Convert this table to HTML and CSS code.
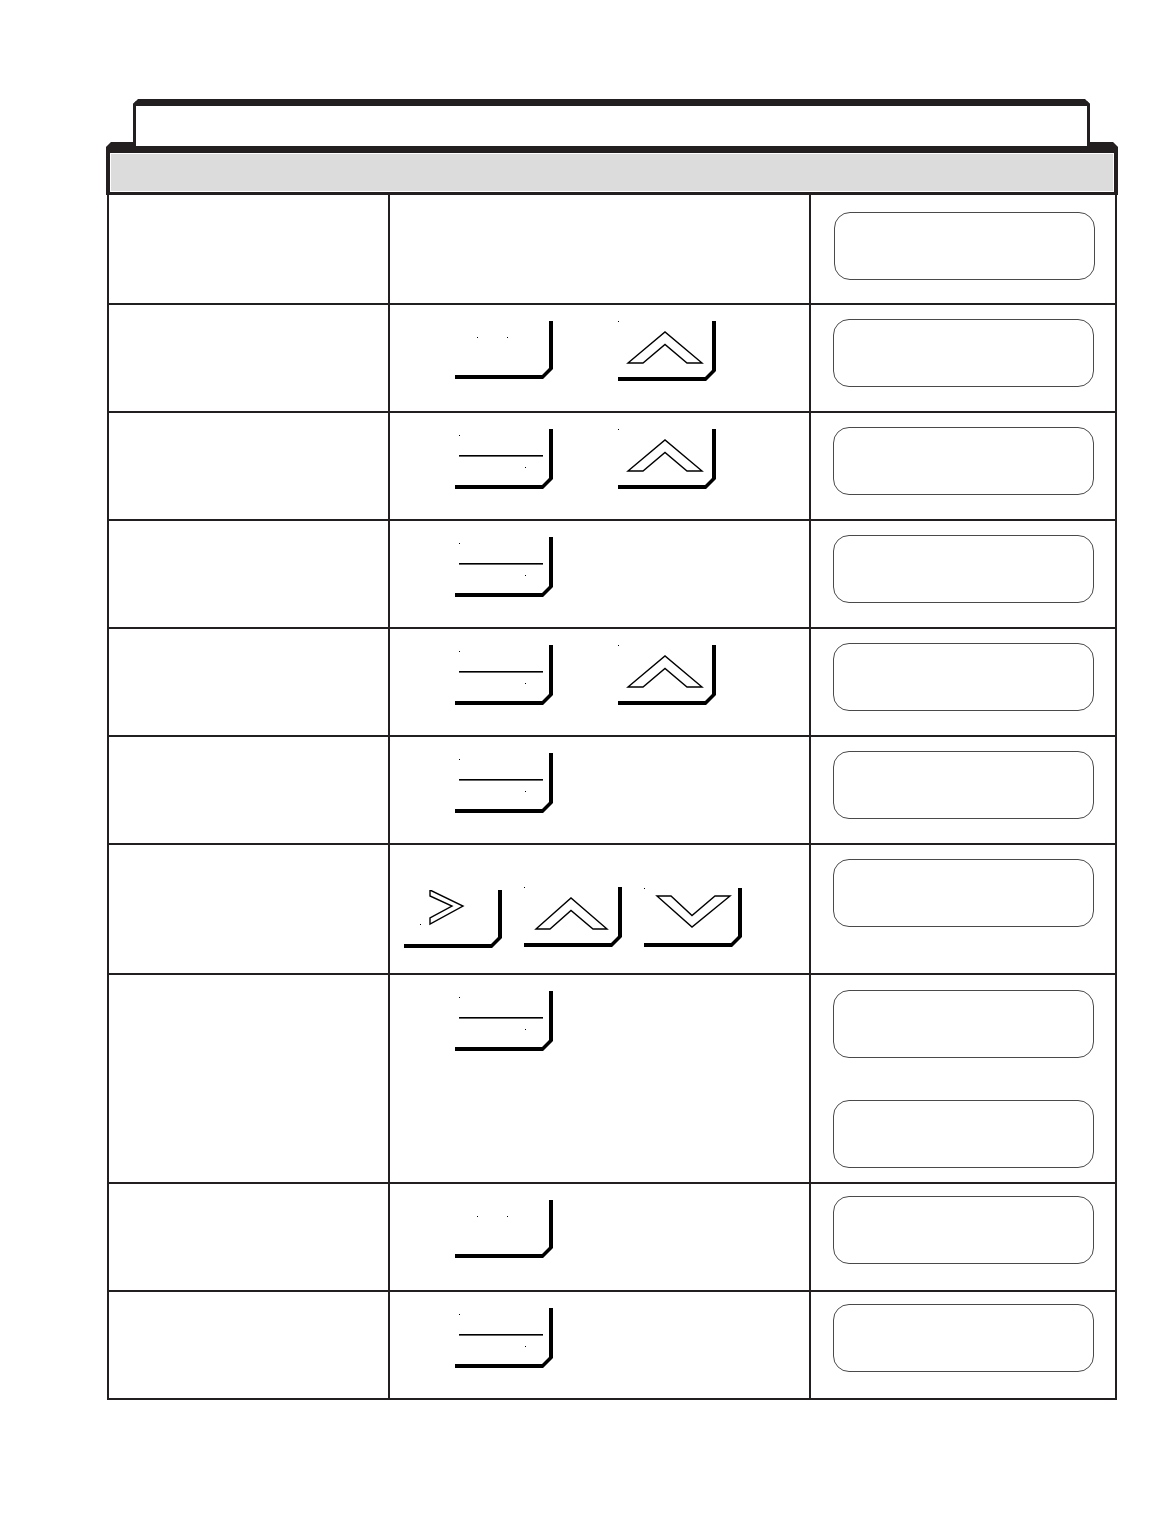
FILE: index.html
```html
<!DOCTYPE html>
<html lang="en">
<head>
<meta charset="utf-8">
<title>Key sequence table</title>
<link rel="stylesheet" href="styles.css">
</head>
<body>
<div class="page">
  <div class="tab"></div>
  <div class="header"></div>
  <div class="grid">
    <!-- row 1 -->
    <div class="cell"></div>
    <div class="cell"></div>
    <div class="cell disp first"><div class="lcd"></div></div>

    <!-- row 2 -->
    <div class="cell"></div>
    <div class="cell keys">
      <svg class="key" viewBox="0 0 98 58" width="98" height="58"><polygon points="0,54 87,54 94,47 94,0 98,0 98,48 88,58 0,58"/><rect x="22" y="16" width="1" height="1"/><rect x="52" y="16" width="1" height="1"/></svg>
      <svg class="key" viewBox="0 0 98 60" width="98" height="60"><polygon points="0,56 87,56 94,49 94,0 98,0 98,50 88,60 0,60"/><rect x="0" y="0" width="1" height="1"/><polygon class="chev" points="10,42 47,11 84,42 69,42 47,23.5 25,42"/></svg>
    </div>
    <div class="cell disp"><div class="lcd"></div></div>

    <!-- row 3 -->
    <div class="cell"></div>
    <div class="cell keys">
      <svg class="key" viewBox="0 0 98 60" width="98" height="60"><polygon points="0,56 87,56 94,49 94,0 98,0 98,50 88,60 0,60"/><rect x="4" y="6" width="1" height="1"/><rect x="4" y="26" width="84" height="1.6"/><rect x="70" y="38" width="1" height="1"/></svg>
      <svg class="key" viewBox="0 0 98 60" width="98" height="60"><polygon points="0,56 87,56 94,49 94,0 98,0 98,50 88,60 0,60"/><rect x="0" y="0" width="1" height="1"/><polygon class="chev" points="10,42 47,11 84,42 69,42 47,23.5 25,42"/></svg>
    </div>
    <div class="cell disp"><div class="lcd"></div></div>

    <!-- row 4 -->
    <div class="cell"></div>
    <div class="cell keys">
      <svg class="key" viewBox="0 0 98 60" width="98" height="60"><polygon points="0,56 87,56 94,49 94,0 98,0 98,50 88,60 0,60"/><rect x="4" y="6" width="1" height="1"/><rect x="4" y="26" width="84" height="1.6"/><rect x="70" y="38" width="1" height="1"/></svg>
    </div>
    <div class="cell disp"><div class="lcd"></div></div>

    <!-- row 5 -->
    <div class="cell"></div>
    <div class="cell keys">
      <svg class="key" viewBox="0 0 98 60" width="98" height="60"><polygon points="0,56 87,56 94,49 94,0 98,0 98,50 88,60 0,60"/><rect x="4" y="6" width="1" height="1"/><rect x="4" y="26" width="84" height="1.6"/><rect x="70" y="38" width="1" height="1"/></svg>
      <svg class="key" viewBox="0 0 98 60" width="98" height="60"><polygon points="0,56 87,56 94,49 94,0 98,0 98,50 88,60 0,60"/><rect x="0" y="0" width="1" height="1"/><polygon class="chev" points="10,42 47,11 84,42 69,42 47,23.5 25,42"/></svg>
    </div>
    <div class="cell disp"><div class="lcd"></div></div>

    <!-- row 6 -->
    <div class="cell"></div>
    <div class="cell keys">
      <svg class="key" viewBox="0 0 98 60" width="98" height="60"><polygon points="0,56 87,56 94,49 94,0 98,0 98,50 88,60 0,60"/><rect x="4" y="6" width="1" height="1"/><rect x="4" y="26" width="84" height="1.6"/><rect x="70" y="38" width="1" height="1"/></svg>
    </div>
    <div class="cell disp"><div class="lcd"></div></div>

    <!-- row 7 -->
    <div class="cell"></div>
    <div class="cell keys three">
      <svg class="key k-right" viewBox="0 0 98 58" width="98" height="58"><polygon points="0,54 87,54 94,47 94,0 98,0 98,48 88,58 0,58"/><rect x="16" y="34" width="1" height="1"/><polygon class="chev" points="26,0 59,16 26,34 26,28 48,16 26,6"/></svg>
      <svg class="key" viewBox="0 0 98 60" width="98" height="60"><polygon points="0,56 87,56 94,49 94,0 98,0 98,50 88,60 0,60"/><rect x="0" y="0" width="1" height="1"/><polygon class="chev" points="12,42 47,11 83,42 69,42 47,23.5 26,42"/></svg>
      <svg class="key k-down" viewBox="0 0 98 59" width="98" height="59"><polygon points="0,55 87,55 94,48 94,0 98,0 98,49 88,59 0,59"/><rect x="0" y="0" width="1" height="1"/><polygon class="chev" points="13,8 48,39 86,8 71,8 48,27.5 27,8"/></svg>
    </div>
    <div class="cell disp"><div class="lcd"></div></div>

    <!-- row 8 -->
    <div class="cell"></div>
    <div class="cell keys">
      <svg class="key" viewBox="0 0 98 60" width="98" height="60"><polygon points="0,56 87,56 94,49 94,0 98,0 98,50 88,60 0,60"/><rect x="4" y="6" width="1" height="1"/><rect x="4" y="26" width="84" height="1.6"/><rect x="70" y="38" width="1" height="1"/></svg>
    </div>
    <div class="cell disp double"><div class="lcd"></div><div class="lcd"></div></div>

    <!-- row 9 -->
    <div class="cell"></div>
    <div class="cell keys">
      <svg class="key" viewBox="0 0 98 58" width="98" height="58"><polygon points="0,54 87,54 94,47 94,0 98,0 98,48 88,58 0,58"/><rect x="22" y="16" width="1" height="1"/><rect x="52" y="16" width="1" height="1"/></svg>
    </div>
    <div class="cell disp tight"><div class="lcd"></div></div>

    <!-- row 10 -->
    <div class="cell"></div>
    <div class="cell keys">
      <svg class="key" viewBox="0 0 98 60" width="98" height="60"><polygon points="0,56 87,56 94,49 94,0 98,0 98,50 88,60 0,60"/><rect x="4" y="6" width="1" height="1"/><rect x="4" y="26" width="84" height="1.6"/><rect x="70" y="38" width="1" height="1"/></svg>
    </div>
    <div class="cell disp tight"><div class="lcd"></div></div>
  </div>
</div>
</body>
</html>
```

FILE: styles.css
```css
html, body {
  margin: 0;
  padding: 0;
  background: #ffffff;
  font-family: "Liberation Sans", Arial, sans-serif;
}

.page {
  padding: 99px 0 0 106px;
  width: 1012px;
}

.tab {
  position: relative;
  z-index: 1;
  box-sizing: border-box;
  height: 47px;
  margin: 0 28px 0 27px;
  background: #ffffff;
  border: 3px solid #231f20;
  border-top-width: 7px;
  border-bottom: none;
  clip-path: polygon(5px 0, calc(100% - 5px) 0, 100% 5px, 100% 100%, 0 100%, 0 5px);
}

.header {
  box-sizing: border-box;
  height: 53px;
  margin-top: -4px;
  background: #dcdcdc;
  border: 4px solid #231f20;
  border-top-width: 11px;
  border-bottom-width: 3px;
  box-shadow: inset 0 0 0 1px #ffffff;
  clip-path: polygon(5px 0, calc(100% - 5px) 0, 100% 5px, 100% 100%, 0 100%, 0 5px);
}

.grid {
  display: grid;
  grid-template-columns: 279px 419px 304px;
  grid-template-rows: 108px 106px 106px 106px 106px 106px 128px 207px 106px 106px;
  gap: 2px;
  padding: 0 2px 2px 2px;
  margin: 0 1px;
  background: #231f20;
}

.cell {
  background: #ffffff;
}

.keys {
  display: flex;
  align-items: flex-start;
  gap: 65px;
  padding: 16px 0 0 65px;
}

.keys.three {
  gap: 22px;
  padding: 42px 0 0 14px;
}

.key {
  display: block;
  flex: none;
  fill: #000000;
}

.key .chev {
  fill: #ffffff;
  stroke: #000000;
  stroke-width: 1.4;
  stroke-linejoin: miter;
}

.k-right {
  margin-top: 3px;
}

.k-down {
  margin-top: 1px;
}

.disp {
  display: flex;
  flex-direction: column;
  gap: 42px;
  padding: 14px 0 0 22px;
}

.disp.first {
  padding: 17px 0 0 23px;
}

.disp.double {
  padding-top: 15px;
}

.disp.tight {
  padding-top: 12px;
}

.lcd {
  box-sizing: border-box;
  width: 261px;
  height: 68px;
  border: 1.3px solid #4a4a4a;
  border-radius: 16px;
}
```
